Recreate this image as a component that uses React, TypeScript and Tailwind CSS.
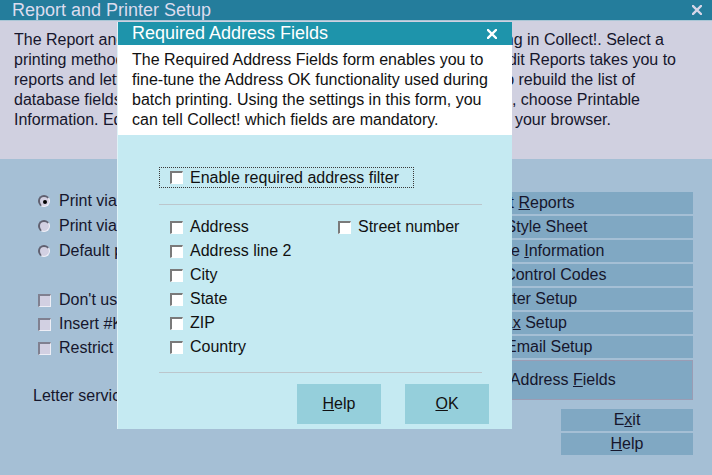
import React from "react";

function CloseX({ color }: { color: string }) {
  return (
    <svg width="10" height="10" viewBox="0 0 10 10">
      <path d="M1 1 L9 9 M9 1 L1 9" stroke={color} strokeWidth="2.4" strokeLinecap="square" />
    </svg>
  );
}

// sunken white checkbox used on the dialog
function Box() {
  return (
    <span className="block w-[13px] h-[13px] shrink-0 bg-white border-t-2 border-l-2 border-t-[#7a7a7a] border-l-[#7a7a7a] border-r border-b border-r-white border-b-white" />
  );
}

// greyed checkbox of the main window
function DimBox() {
  return (
    <span className="block w-[13px] h-[13px] shrink-0 bg-[#d2d0e2] border-t-2 border-l-2 border-t-[#808090] border-l-[#808090] border-r border-b border-r-[#eeeef6] border-b-[#eeeef6]" />
  );
}

function Radio({ on }: { on?: boolean }) {
  return (
    <span className="flex items-center justify-center w-[12px] h-[12px] shrink-0 rounded-full bg-[#d2d0e2] border-t-2 border-l-2 border-t-[#606070] border-l-[#606070] border-r border-b border-r-[#f0f0f8] border-b-[#f0f0f8]">
      {on && <span className="block w-[4px] h-[4px] rounded-full bg-black" />}
    </span>
  );
}

function SideButton({ children, pad = "" }: { children: React.ReactNode; pad?: string }) {
  return (
    <div className={`h-[22px] bg-[#80a8c3] flex items-center justify-center leading-[22px] ${pad}`}>
      <span className="whitespace-pre">{children}</span>
    </div>
  );
}

const descLines: [string, string, string][] = [
  ["The Report and Printer Setup form gives you", "used when printing in Collect!. Select a", "pr-[48px]"],
  ["printing method for your reports. Edit", "Edit Reports takes you to", "pr-[36px]"],
  ["reports and letters. Use this area to", "you to rebuild the list of", "pr-[77px]"],
  ["database fields and other settings", "fields, choose Printable", "pr-[72px]"],
  ["Information. Edit Style Sheet lets you", "sent to your browser.", "pr-[101px]"],
];

const leftFields = ["Address", "Address line 2", "City", "State", "ZIP", "Country"];

export default function App() {
  return (
    <div className="relative w-[712px] h-[475px] overflow-hidden bg-[#a5bfd5] text-[16px] text-[#16162c] font-['Liberation_Sans',Arial,sans-serif]">
      {/* Main window title */}
      <div className="h-[21px] bg-[#247d9c] border-b border-[#a9c6d6] flex items-center justify-between pl-[12px] pr-[10px]">
        <span className="text-[18px] leading-[20px] text-[#dcdcee]">Report and Printer Setup</span>
        <CloseX color="#d6d6e8" />
      </div>

      {/* Description */}
      <div className="h-[138px] bg-[#d0d0e0] pt-[9px]">
        {descLines.map(([l, r, pad], i) => (
          <div key={i} className={`flex h-[20px] leading-[20px] pl-[14px] ${pad}`}>
            <span className="w-[300px] overflow-hidden whitespace-nowrap">{l}</span>
            <span className="ml-auto whitespace-nowrap">{r}</span>
          </div>
        ))}
      </div>

      {/* Main body */}
      <div className="flex">
        <div className="flex-1 min-w-0 overflow-hidden pl-[33px] pt-[30px]">
          <div className="pl-[5px] flex flex-col">
            {["Print via Windows printer driver", "Print via direct to printer", "Default printer for reports"].map((t, i) => (
              <div key={t} className={`flex items-center gap-[9px] h-[24px] whitespace-nowrap ${i === 2 ? "mt-0" : "mb-[1px]"}`}>
                <Radio on={i === 0} />
                <span>{t}</span>
              </div>
            ))}
          </div>
          <div className="pl-[5px] mt-[25px] flex flex-col">
            {["Don't use printer fonts", "Insert #K line feeds", "Restrict printing"].map((t) => (
              <div key={t} className="flex items-center gap-[8px] h-[24px] whitespace-nowrap">
                <DimBox />
                <span>{t}</span>
              </div>
            ))}
          </div>
          <div className="mt-[24px] h-[24px] leading-[24px] whitespace-nowrap">Letter service options</div>
        </div>

        <div className="w-[354px] shrink-0 pl-[10px] pr-[19px] pt-[33px] flex flex-col gap-[2px] whitespace-nowrap">
          <SideButton>
            Edit <u>R</u>eports
          </SideButton>
          <SideButton>Edit Style Sheet</SideButton>
          <SideButton>
            Printable <u>I</u>nformation
          </SideButton>
          <SideButton pad="pr-[2px]">Printer Control Codes</SideButton>
          <SideButton>Printer Setup</SideButton>
          <SideButton>
            Fa<u>x</u> Setup
          </SideButton>
          <SideButton pad="pr-[8px]">Batch Email Setup</SideButton>
          <div className="h-[40px] bg-[#80a8c3] border border-[#9a9cb4] flex items-center justify-center pr-[4px]">
            <span className="whitespace-pre">
              Required Address <u>F</u>ields
            </span>
          </div>
          <div className="flex flex-col gap-[2px] pl-[193px] mt-[7px]">
            <SideButton>
              E<u>x</u>it
            </SideButton>
            <SideButton>
              <u>H</u>elp
            </SideButton>
          </div>
        </div>
      </div>

      {/* Required Address Fields dialog */}
      <div className="absolute left-[117px] top-[22px] w-[395px] h-[407px] bg-[#c5eaf2] border-l border-[#dff2f7] text-[#111]">
        <div className="h-[23px] bg-[#1e94ab] flex items-center justify-between pl-[14px] pr-[15px]">
          <span className="text-[18px] leading-[23px] text-white">Required Address Fields</span>
          <CloseX color="#ffffff" />
        </div>
        <div className="h-[90px] bg-white pt-[5px] pl-[14px] leading-[20px]">
          <div>The Required Address Fields form enables you to</div>
          <div>fine-tune the Address OK functionality used during</div>
          <div>batch printing. Using the settings in this form, you</div>
          <div>can tell Collect! which fields are mandatory.</div>
        </div>

        <div className="pl-[41px] pt-[32px]">
          <div className="w-[255px] h-[21px] border border-dotted border-[#3a3a3a] flex items-center gap-[7px] pl-[10px]">
            <Box />
            <span className="leading-[20px]">Enable required address filter</span>
          </div>

          <div className="mt-[16px] w-[323px] h-[1px] bg-[#bcc6cc]" />

          <div className="mt-[10px] pl-[11px] flex">
            <div className="w-[168px] flex flex-col">
              {leftFields.map((f) => (
                <div key={f} className="h-[24px] flex items-center gap-[7px]">
                  <Box />
                  <span>{f}</span>
                </div>
              ))}
            </div>
            <div className="flex flex-col">
              <div className="h-[24px] flex items-center gap-[7px]">
                <Box />
                <span>Street number</span>
              </div>
            </div>
          </div>

          <div className="mt-[13px] w-[323px] h-[1px] bg-[#bcc6cc]" />
        </div>

        <div className="mt-[11px] flex justify-end gap-[24px] pr-[23px]">
          <div className="w-[84px] h-[40px] bg-[#95cfdb] flex items-center justify-center">
            <span>
              <u>H</u>elp
            </span>
          </div>
          <div className="w-[84px] h-[40px] bg-[#95cfdb] flex items-center justify-center">
            <span>
              <u>O</u>K
            </span>
          </div>
        </div>
      </div>
    </div>
  );
}
